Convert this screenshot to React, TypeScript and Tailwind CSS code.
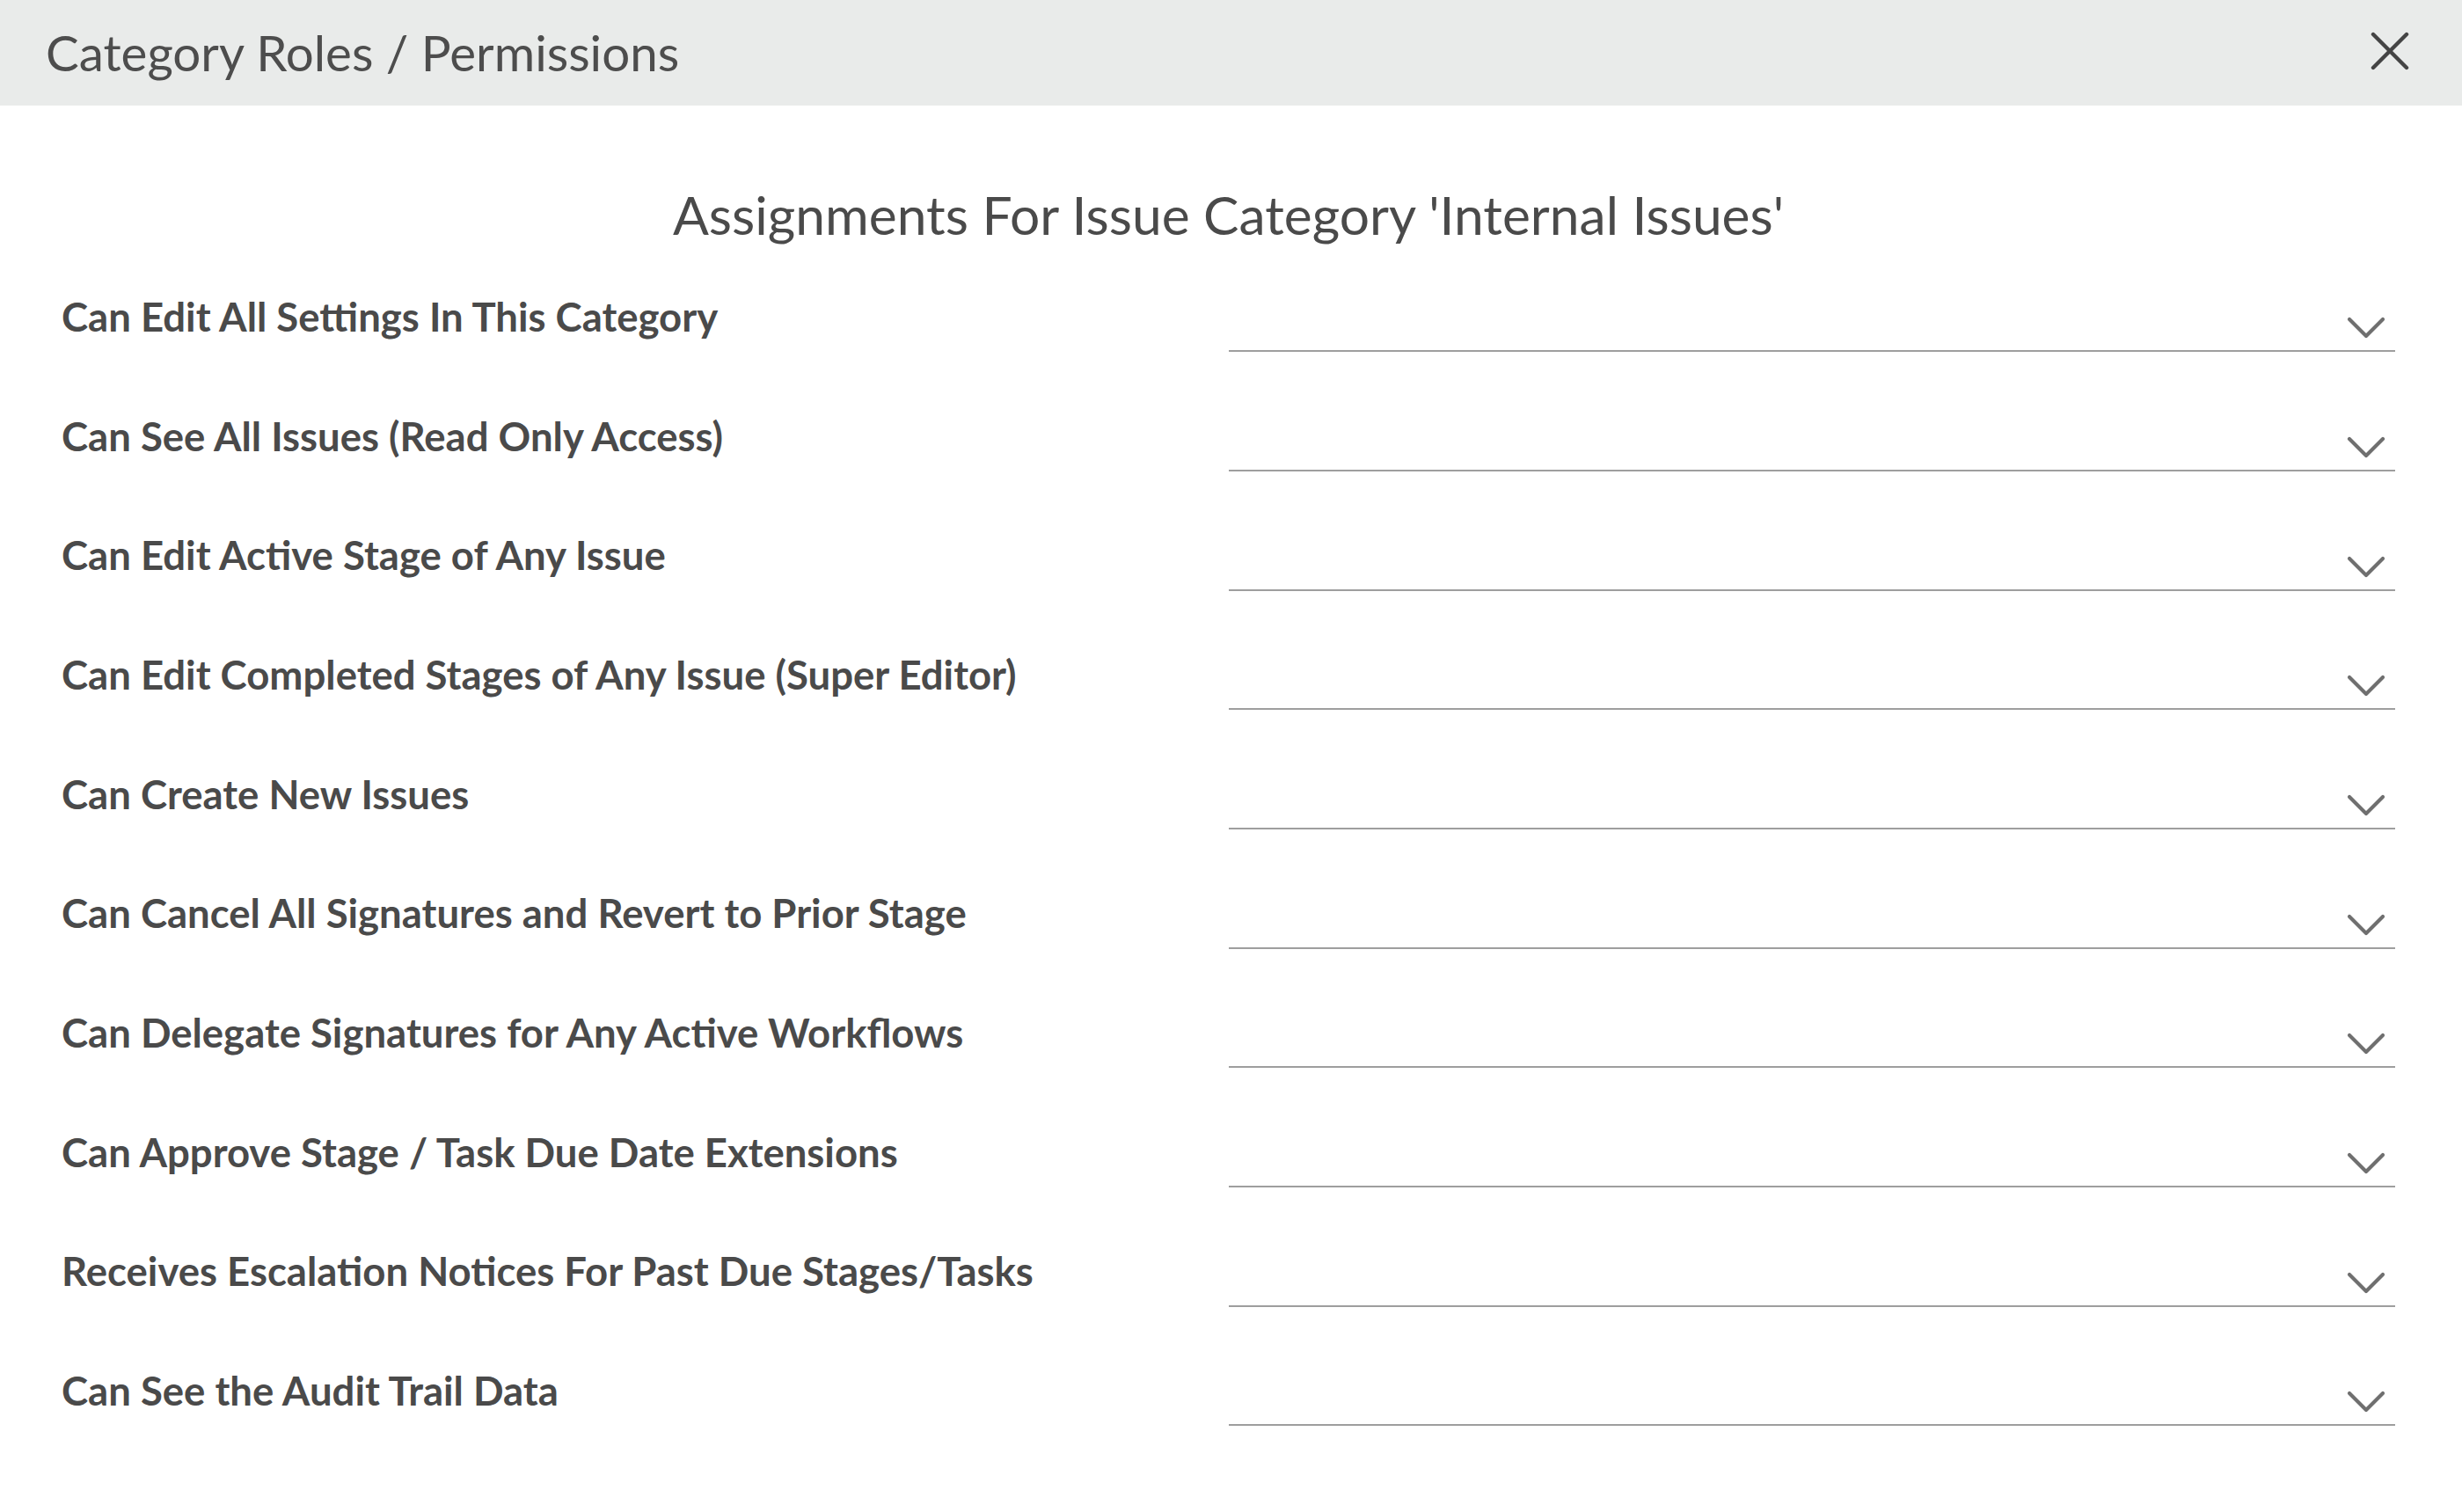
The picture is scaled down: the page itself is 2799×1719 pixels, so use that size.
import React from "react";

const permissions = [
  "Can Edit All Settings In This Category",
  "Can See All Issues (Read Only Access)",
  "Can Edit Active Stage of Any Issue",
  "Can Edit Completed Stages of Any Issue (Super Editor)",
  "Can Create New Issues",
  "Can Cancel All Signatures and Revert to Prior Stage",
  "Can Delegate Signatures for Any Active Workflows",
  "Can Approve Stage / Task Due Date Extensions",
  "Receives Escalation Notices For Past Due Stages/Tasks",
  "Can See the Audit Trail Data",
];

function Chevron() {
  return (
    <svg width="44" height="26" viewBox="0 0 44 26" fill="none">
      <polyline
        points="3,3 22,22 41,3"
        stroke="#6f6f6f"
        strokeWidth="4.2"
        strokeLinecap="round"
        strokeLinejoin="round"
      />
    </svg>
  );
}

export default function App() {
  return (
    <div className="w-[2799px] h-[1719px] flex flex-col bg-white font-['Lato',sans-serif] overflow-hidden">
      <div className="h-[120px] shrink-0 bg-[#e9ebea] flex items-center justify-between pl-[52px] pr-[60px]">
        <div className="text-[56.5px] leading-none text-[#4d4d4d] pb-[2px]">Category Roles / Permissions</div>
        <svg width="44" height="44" viewBox="0 0 44 44" fill="none" className="mb-[4px]">
          <line x1="3" y1="3" x2="41" y2="41" stroke="#444" strokeWidth="4.4" strokeLinecap="round" />
          <line x1="41" y1="3" x2="3" y2="41" stroke="#444" strokeWidth="4.4" strokeLinecap="round" />
        </svg>
      </div>
      <div className="flex-1 overflow-y-auto [&::-webkit-scrollbar]:w-[3px] [&::-webkit-scrollbar-track]:bg-[#ececec] [&::-webkit-scrollbar-thumb]:bg-[#a3a3a3] [&::-webkit-scrollbar-thumb]:rounded-full">
        <div className="pt-[91px] pb-[215px] pl-[70px] pr-[76px]">
          <div className="text-center text-[60.5px] leading-[66px] text-[#4a4a4a]">
            Assignments For Issue Category 'Internal Issues'
          </div>
          <div className="mt-[49px] flex flex-col gap-[63.67px]">
            {permissions.map((p) => (
              <div key={p} className="grid grid-cols-2 h-[72px]">
                <div className="flex items-center text-[45.5px] font-bold text-[#4a4a4a] pb-[6px] whitespace-nowrap">{p}</div>
                <div className="border-b-2 border-[#9e9e9e] flex items-end justify-end pr-[11px] pb-[12px]">
                  <Chevron />
                </div>
              </div>
            ))}
          </div>
        </div>
      </div>
    </div>
  );
}
